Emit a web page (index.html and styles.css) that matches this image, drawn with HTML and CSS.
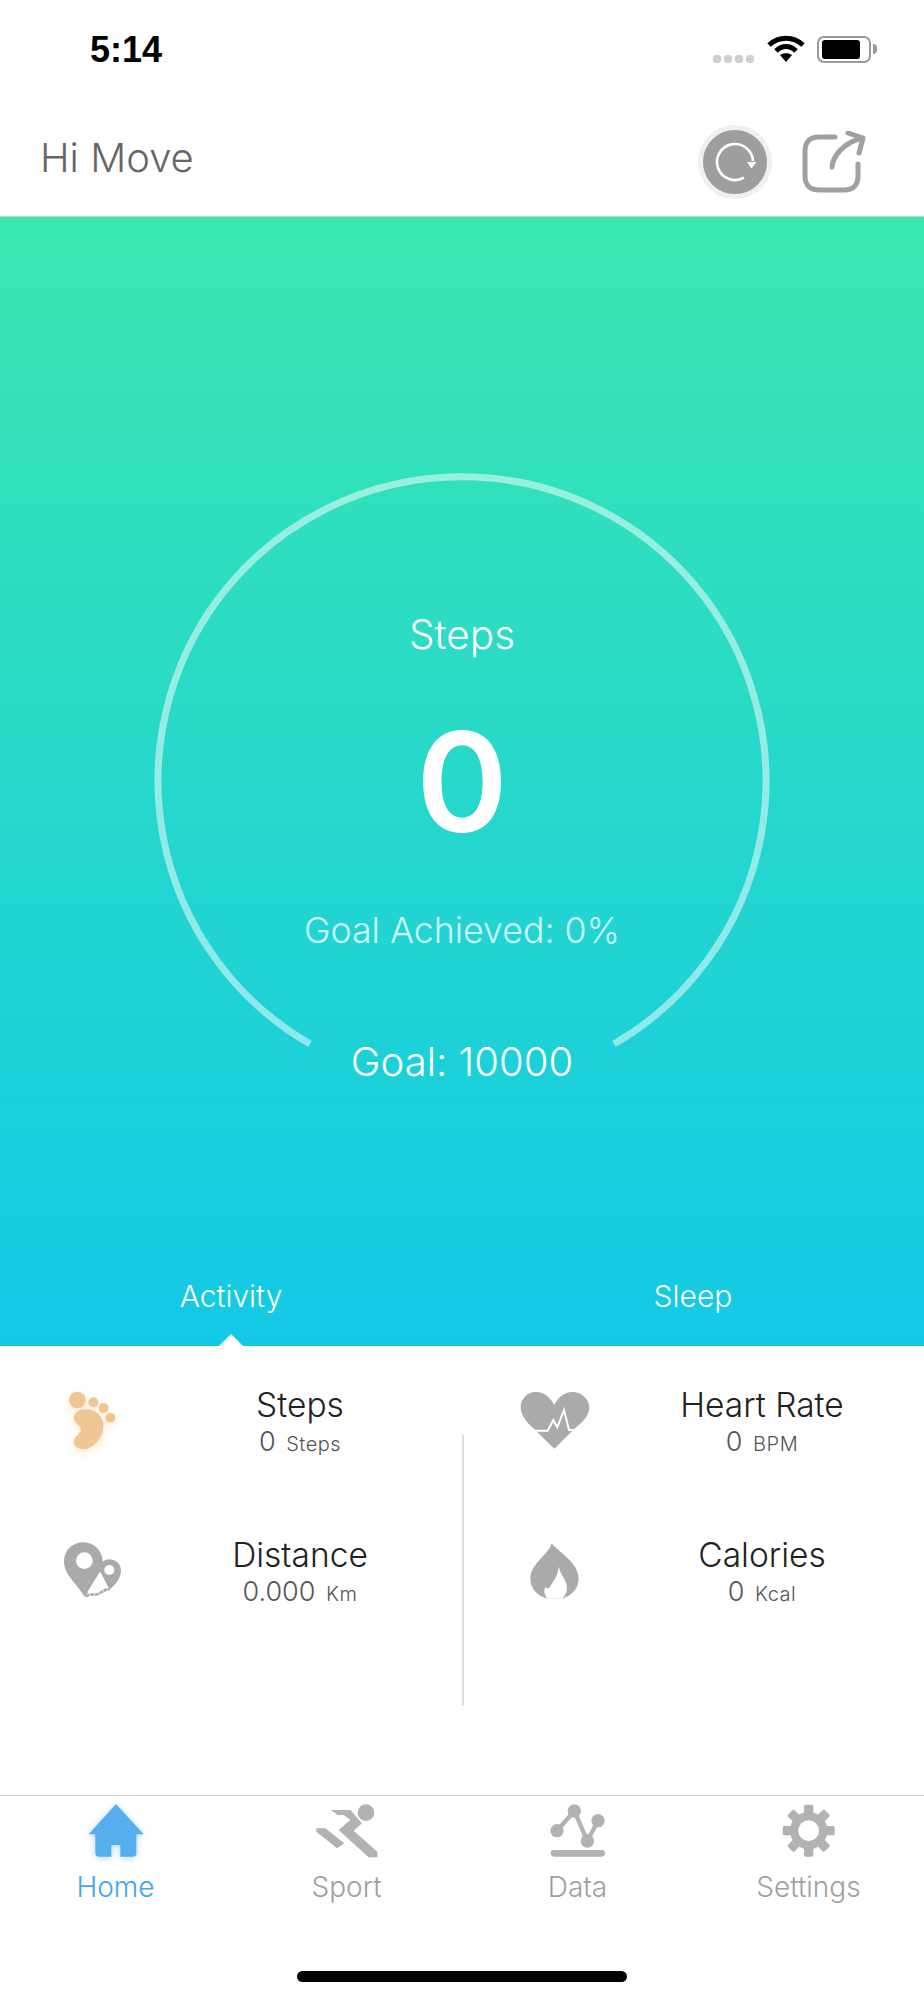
FILE: index.html
```html
<!DOCTYPE html>
<html lang="en">
<head>
  <meta charset="UTF-8" />
  <meta name="viewport" content="width=device-width, initial-scale=1.0" />
  <title>Hi Move</title>
  <link rel="stylesheet" href="styles.css">
</head>
<body>

  <div class="app">

    <div class="status-bar">
      <div class="clock">5:14</div>
      <div class="status-icons">
        <div class="signal"><i></i><i></i><i></i><i></i></div>
        <svg class="wifi" width="38" height="28" viewBox="0 0 38 28">
          <path d="M2 10 C12 1 26 1 36 10" />
          <path d="M9 16 C15 10 23 10 29 16" />
          <path class="wifi-dot" d="M13 20 C16 17.500 22 17.500 25 20 L19 27 Z" />
        </svg>
        <div class="battery"><div class="battery-level"></div></div>
        <div class="battery-cap"></div>
      </div>
    </div>

    <header class="top-bar">
      <div class="greeting">Hi Move</div>
      <div class="top-actions">
        <div class="sync-btn">
          <svg width="46" height="46" viewBox="0 0 46 46">
            <path d="M41 22 A18 18 0 1 0 32 38.600" fill="none" stroke="#fff" stroke-width="2.600" />
            <path d="M35 23 H44.500 L39.500 29.500 Z" fill="#fff" />
          </svg>
        </div>
        <svg class="share-icon" width="64" height="62" viewBox="0 0 64 62">
          <path d="M33 6 H17 C8 6 3 11 3 20 V45 C3 54 8 59 17 59 H42 C51 59 56 54 56 45 V33" />
          <path d="M30 36 C31 24 42 12 60 7" />
          <path d="M46 2 L61 7 L57 22" />
        </svg>
      </div>
    </header>

    <section class="hero">
      <div class="ring-box">
        <svg class="ring" width="616" height="616" viewBox="0 0 616 616">
          <path d="M156 571 A304 304 0 1 1 460 571" />
        </svg>
        <div class="ring-label">Steps</div>
        <div class="ring-value">0</div>
        <div class="ring-achieved">Goal Achieved: 0%</div>
        <div class="ring-goal">Goal: 10000</div>
      </div>
      <div class="mode-tabs">
        <div class="mode-tab active">Activity</div>
        <div class="mode-tab">Sleep</div>
      </div>
    </section>

    <section class="stats">
      <div class="stat-col">
        <div class="stat">
          <svg class="foot-icon" width="100" height="90" viewBox="0 0 300 270">
            <circle cx="112" cy="90" r="25" />
            <circle cx="160" cy="97" r="15" />
            <circle cx="191" cy="114" r="15" />
            <circle cx="211" cy="143" r="15" />
            <path d="M135 118 C170 118 192 140 190 170 C188 210 155 238 128 237 C105 236 93 218 108 200 C118 188 128 182 120 170 C110 160 100 155 101 142 C103 127 118 118 135 118 Z" />
          </svg>
          <div class="stat-text">
            <div class="stat-title">Steps</div>
            <div class="stat-value">0 <span>Steps</span></div>
          </div>
        </div>
        <div class="stat">
          <svg class="stat-icon" width="100" height="90" viewBox="0 0 300 270">
            <path d="M208 118 C228 118 243 133 243 152 C243 175 225 195 205 212 L178 160 C175 135 188 118 208 118 Z" />
            <path class="cut" d="M178 150 L134 222 L208 208 Z" />
            <path d="M72 125 C72 90 98 67 130 67 C162 67 188 92 188 125 C188 150 165 180 135 232 C115 195 72 165 72 125 Z" />
            <path class="cut" d="M178 158 L142 216 L204 205 Z" />
            <circle class="cut" cx="133" cy="122" r="25" />
            <circle class="cut" cx="208" cy="150" r="15" />
            <path class="wavy" d="M138 229 Q150 222 160 224 T185 216 T208 208" />
          </svg>
          <div class="stat-text">
            <div class="stat-title">Distance</div>
            <div class="stat-value">0.000 <span>Km</span></div>
          </div>
        </div>
      </div>

      <div class="stats-divider"></div>

      <div class="stat-col right">
        <div class="stat">
          <svg class="stat-icon" width="100" height="90" viewBox="6 0 300 270">
            <path d="M163 105 C150 80 130 66 108 66 C80 66 62 88 62 112 C62 135 80 158 100 175 L163 236 L225 175 C250 155 268 135 268 112 C268 88 245 66 218 66 C195 66 175 80 163 105 Z" />
            <path class="ecg" d="M98 182 H143 L160 150 L172 172 L192 120 L207 180 H232" />
          </svg>
          <div class="stat-text">
            <div class="stat-title">Heart Rate</div>
            <div class="stat-value">0 <span>BPM</span></div>
          </div>
        </div>
        <div class="stat">
          <svg class="stat-icon" width="100" height="90" viewBox="0 0 300 270">
            <path d="M148 70 C150 95 85 130 85 175 C85 205 105 228 135 236 L180 236 C210 228 230 205 230 175 C230 130 170 95 148 70 Z" />
            <path class="cut" d="M170 140 C178 170 197 185 195 205 C194 220 188 230 180 236 L135 236 C128 225 124 210 130 200 C133 208 140 205 145 200 C148 190 168 170 170 140 Z" />
          </svg>
          <div class="stat-text">
            <div class="stat-title">Calories</div>
            <div class="stat-value">0 <span>Kcal</span></div>
          </div>
        </div>
      </div>
    </section>

    <nav class="tab-bar">
      <div class="tabs">
        <div class="tab active">
          <svg class="home-icon" width="100" height="60" viewBox="197 60 300 180">
            <path d="M347 72 L430 163 H408 V220 Q408 230 398 230 H360 V195 H333 V230 H295 Q285 230 285 220 V163 H265 Z" />
          </svg>
          <span>Home</span>
        </div>
        <div class="tab">
          <svg width="100" height="60" viewBox="890 60 300 180">
            <circle cx="1097" cy="98" r="25" />
            <path d="M992 90 H1050 L1085 130 L1060 152 L1131 215 V232 H1105 L1015 150 L1050 120 L1030 105 H1012 Z" />
            <path d="M948 145 H975 L1032 190 L1010 205 L948 155 Z" />
          </svg>
          <span>Sport</span>
        </div>
        <div class="tab">
          <svg width="100" height="60" viewBox="197 60 300 180">
            <polyline points="284,152 336,93 375,183 407,122" fill="none" stroke="#b2b2b2" stroke-width="13" />
            <circle cx="284" cy="152" r="20" />
            <circle cx="336" cy="93" r="20" />
            <circle cx="375" cy="183" r="20" />
            <circle cx="407" cy="122" r="20" />
            <rect x="265" y="210" width="163" height="20" rx="10" />
          </svg>
          <span>Data</span>
        </div>
        <div class="tab">
          <svg width="100" height="60" viewBox="890 60 300 180">
            <rect x="1025" y="74" width="28" height="156" rx="5" />
            <rect x="1025" y="74" width="28" height="156" rx="5" transform="rotate(45 1039 152)" />
            <rect x="1025" y="74" width="28" height="156" rx="5" transform="rotate(90 1039 152)" />
            <rect x="1025" y="74" width="28" height="156" rx="5" transform="rotate(135 1039 152)" />
            <circle cx="1039" cy="152" r="56" />
            <circle cx="1039" cy="152" r="31" fill="#fff" />
          </svg>
          <span>Settings</span>
        </div>
      </div>
      <div class="home-indicator"></div>
    </nav>

  </div>

</body>
</html>
```

FILE: styles.css
```css
* {
  margin: 0;
  padding: 0;
  box-sizing: border-box;
  font-family: 'Inter', 'Liberation Sans', sans-serif;
}

body {
  background: #fff;
  color: #333;
}

.app {
  width: 924px;
  height: 2000px;
  display: flex;
  flex-direction: column;
  overflow: hidden;
}

/* status bar */
.status-bar {
  height: 88px;
  display: flex;
  justify-content: space-between;
  padding: 30px 47px 0 90px;
}

.clock {
  font-family: 'Liberation Sans', sans-serif;
  font-size: 36px;
  line-height: 40px;
  font-weight: 700;
  color: #000;
}

.status-icons {
  height: 34px;
  display: flex;
  align-items: flex-start;
}

.signal {
  display: flex;
  gap: 3px;
  margin: 25px 13px 0 0;
}

.signal i {
  width: 8px;
  height: 8px;
  border-radius: 3px;
  background: #cfcfcf;
}

.wifi {
  margin: 5px 12px 0 0;
}

.wifi path {
  fill: none;
  stroke: #000;
  stroke-width: 5;
}

.wifi .wifi-dot {
  fill: #000;
  stroke: none;
}

.battery {
  width: 54px;
  height: 27px;
  margin-top: 6px;
  border: 2px solid #999;
  border-radius: 7px;
  padding: 2px 9px 2px 3px;
}

.battery-level {
  height: 100%;
  background: #000;
  border-radius: 3px;
}

.battery-cap {
  width: 4px;
  height: 10px;
  margin: 14px 0 0 2px;
  background: #999;
  border-radius: 0 4px 4px 0;
}

/* top bar */
.top-bar {
  height: 129px;
  border-bottom: 1px solid #ccc;
  display: flex;
  justify-content: space-between;
  align-items: center;
  padding: 10px 58px 0 40px;
}

.greeting {
  font-size: 40px;
  font-weight: 300;
  color: #666;
}

.top-actions {
  display: flex;
  align-items: center;
  gap: 30px;
  margin-top: 10px;
}

.sync-btn {
  width: 74px;
  height: 74px;
  border-radius: 50%;
  background: #9e9e9e;
  border: 5px solid #f0f0f0;
  display: flex;
  align-items: center;
  justify-content: center;
}

.share-icon path {
  fill: none;
  stroke: #a0a0a0;
  stroke-width: 5;
  stroke-linecap: round;
  stroke-linejoin: round;
}

/* hero */
.hero {
  height: 1129px;
  background: linear-gradient(to bottom, #3ae7b0, #13c9e6);
  display: flex;
  flex-direction: column;
  align-items: center;
  padding-top: 256px;
  color: #fff;
}

.ring-box {
  position: relative;
  width: 616px;
  height: 616px;
  display: flex;
  flex-direction: column;
  align-items: center;
  padding-top: 137px;
}

.ring {
  position: absolute;
  top: 0;
  left: 0;
}

.ring path {
  fill: none;
  stroke: rgba(255, 255, 255, 0.5);
  stroke-width: 7;
}

.ring-label {
  font-size: 40.500px;
  line-height: 50px;
  font-weight: 350;
}

.ring-value {
  font-size: 139px;
  line-height: 140px;
  font-weight: 600;
  margin-top: 52px;
}

.ring-achieved {
  font-size: 35.700px;
  line-height: 44px;
  font-weight: 300;
  color: rgba(255, 255, 255, 0.8);
  margin-top: 56px;
}

.ring-goal {
  font-size: 40px;
  line-height: 48px;
  font-weight: 350;
  margin-top: 86px;
}

.mode-tabs {
  width: 100%;
  margin-top: auto;
  display: grid;
  grid-template-columns: 1fr 1fr;
}

.mode-tab {
  position: relative;
  height: 72px;
  text-align: center;
  font-size: 30px;
  line-height: 44px;
  font-weight: 300;
}

.mode-tab.active::after {
  content: "";
  position: absolute;
  left: 50%;
  bottom: 0;
  margin-left: -12px;
  border-left: 12px solid transparent;
  border-right: 12px solid transparent;
  border-bottom: 12px solid #fff;
}

/* stats */
.stats {
  flex: 1;
  display: grid;
  grid-template-columns: 462px 2px 460px;
  padding-top: 24px;
}

.stat {
  height: 150px;
  display: grid;
  grid-template-columns: 180px 240px;
}

.right .stat {
  grid-template-columns: 176px 244px;
}

.stat svg {
  justify-self: center;
}

.stat-icon {
  fill: #aaa;
}

.stat-icon .cut {
  fill: #fff;
}

.stat-icon .ecg {
  fill: none;
  stroke: #fff;
  stroke-width: 6;
}

.stat-icon .wavy {
  fill: none;
  stroke: #aaa;
  stroke-width: 8;
  stroke-dasharray: 12 2;
}

.foot-icon {
  fill: #efc795;
  filter: drop-shadow(0 3px 4px rgba(239, 199, 149, 0.45));
}

.stat-text {
  padding-top: 15px;
  text-align: center;
}

.stat-title {
  font-size: 33.500px;
  line-height: 40px;
  font-weight: 300;
  color: #222;
}

.stat-value {
  font-size: 27px;
  line-height: 34px;
  font-weight: 300;
  color: #555;
}

.stat-value span {
  font-size: 20px;
  margin-left: 3px;
  letter-spacing: 0.5px;
}

.stats-divider {
  background: #ddd;
  margin: 65px 0 89px;
}

/* tab bar */
.tab-bar {
  height: 205px;
  border-top: 1px solid #ccc;
  padding-top: 4px;
  display: flex;
  flex-direction: column;
}

.tabs {
  display: grid;
  grid-template-columns: repeat(4, 1fr);
}

.tab {
  display: flex;
  flex-direction: column;
  align-items: center;
  color: #a0a0a0;
  font-size: 28px;
  line-height: 34px;
  font-weight: 300;
}

.tab svg {
  fill: #b2b2b2;
}

.tab span {
  margin-top: 10px;
}

.tab.active {
  color: #42a5ee;
}

.tab .home-icon {
  fill: #55aeee;
  filter: drop-shadow(0 1px 3px rgba(85, 174, 238, 0.5));
}

.home-indicator {
  width: 330px;
  height: 11px;
  margin: auto auto 18px;
  background: #000;
  border-radius: 6px;
}
```
